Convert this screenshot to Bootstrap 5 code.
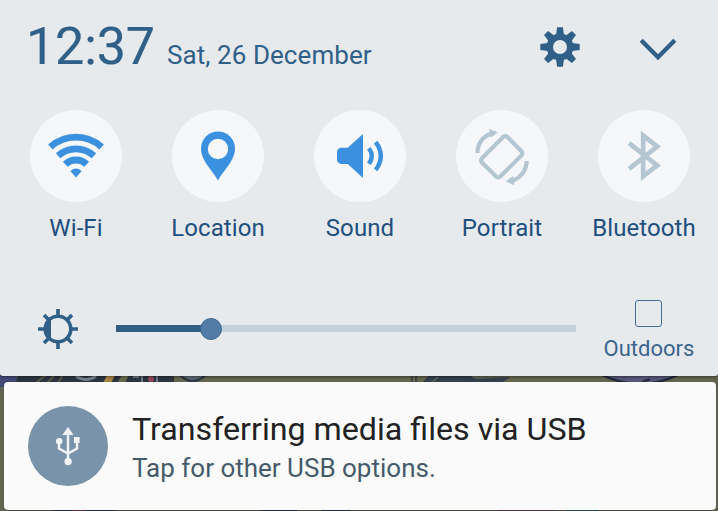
<!DOCTYPE html>
<html lang="en">
<head>
<meta charset="utf-8">
<meta name="viewport" content="width=device-width, initial-scale=1">
<title>Quick settings</title>
<link rel="stylesheet" href="https://cdn.jsdelivr.net/npm/bootstrap@5.3.0/dist/css/bootstrap.min.css">
<style>
body{font-family:Roboto,sans-serif;width:718px;height:511px;background:#63654f;color:#305f88}
svg{display:block;flex:none}
.wallpaper{z-index:-1}
.shade{height:376px;background:#e6eaed;border-radius:0 0 3px 3px;box-shadow:0 1px 3px rgba(0,0,0,.45)}
.shade-head{height:110px;padding:0 40px 0 26px}
.clock{font-size:52px;line-height:60px;margin-top:17px;width:130px;letter-spacing:-.1px;-webkit-text-stroke:.2px}
.date{font-size:26px;line-height:32px;margin:39px 0 0 11px;letter-spacing:.07px}
.head-icons{margin-top:27px;gap:58px}
.tiles{padding:0 3px 0 5px}
.tile{width:142px;font-size:24px;line-height:28px;letter-spacing:.1px;color:#214f7d}
.disc{width:92px;height:92px;background:#f5f7fa;margin-bottom:12px}
.on{color:#3b91df}
.off{color:#b5c6d3}
.bright{margin-top:57px;padding-left:38px}
.bright>svg{margin-top:10px}
.track{width:460px;height:7px;margin:26px 0 0 38px;background:#c3cfd9}
.track-fill{height:7px;background:#305f84}
.knob{width:22px;height:22px;left:84px;top:-7px;background:#527ca5;border:1px solid #3f6a93}
.outdoors{width:146px;margin-right:-4px;font-size:22px;line-height:26px;color:#3b658e}
.box{width:27px;height:27px;border:1.5px solid #426e97;border-radius:3px;margin:1px 1px 9px 0}
.note{margin:6px 2px 0 4px;height:128px;border-radius:4px;background:#fafafa;padding-left:24px;box-shadow:0 1px 2px rgba(0,0,0,.3)}
.note-icon{width:80px;height:80px;background:#7993aa}
.note-text{margin-left:24px;padding-top:2px}
.note-title{font-size:32.2px;line-height:38px;color:#222}
.note-sub{font-size:26px;line-height:32px;margin-top:4px;color:#455a6b}
</style>
<script src="https://cdn.jsdelivr.net/npm/bootstrap@5.3.0/dist/js/bootstrap.bundle.min.js"></script>
</head>
<body class="overflow-hidden position-relative">
<svg class="wallpaper position-absolute top-0 start-0" width="718" height="511" viewBox="0 0 718 511">
  <path d="M0 370H20L15 384 4 387H0Z" fill="#414a77"/>
  <path d="M19 374H174V384H15Z" fill="#2c3440"/>
  <path d="M36 383L46 375M47 383L55 375M58 383L63 375" stroke="#5a5d48" stroke-width="2"/>
  <path d="M76 376Q86 383 96 376" stroke="#78818a" stroke-width="3" fill="none"/>
  <path d="M103 383L107 375H115L111 383Z" fill="#a98543"/>
  <path d="M117 383L122 375H129L125 383Z" fill="#686a48"/>
  <path d="M133 377H139M142 382V376M157 376V382" stroke="#6f7a85" stroke-width="2"/>
  <circle cx="151" cy="379" r="3" fill="#91465a"/>
  <path d="M180 375Q192 387 206 375" fill="#5f6770" stroke="#2b3441" stroke-width="2"/>
  <path d="M412 384V374M416 384V374" stroke="#343d43" stroke-width="1.5"/>
  <path d="M421 384L430 374H468L476 379 510 377 500 384Z" fill="#343f4d"/>
  <path d="M472 377L495 375M430 384L438 377" stroke="#686c60" stroke-width="1.5"/>
  <path d="M600 374Q640 394 680 374Z" fill="#59577a" stroke="#202737" stroke-width="2"/>
  <path d="M641 384Q646 379 650 380" stroke="#202737" stroke-width="2" fill="none"/>
  <path d="M52 510.5H116M260 510.5H297M322 510.5H350" stroke="#303850" stroke-width="2"/>
  <path d="M72 510.5H85" stroke="#8b3850" stroke-width="2"/>
  <path d="M497 510.5H556" stroke="#6c4060" stroke-width="2"/>
  <path d="M567 510.5H598" stroke="#28616a" stroke-width="2"/>
</svg>

<section class="shade">
  <header class="shade-head d-flex align-items-start">
    <div class="clock">12:37</div>
    <div class="date">Sat, 26 December</div>
    <div class="head-icons d-flex ms-auto">
      <svg width="40" height="40" viewBox="-20 -20 40 40" fill="currentColor">
        <circle r="10.2" fill="none" stroke="currentColor" stroke-width="6.4"/>
        <g id="teeth"><path id="tooth" d="M-4-12L-2.9-19.7H2.9L4-12Z"/><use href="#tooth" transform="rotate(90)"/><use href="#tooth" transform="rotate(180)"/><use href="#tooth" transform="rotate(270)"/></g>
        <use href="#teeth" transform="rotate(45)"/>
      </svg>
      <svg width="40" height="40" viewBox="0 0 40 40" fill="none" stroke="currentColor" stroke-width="4.4"><path d="M3.2 13.2L20 30.2 36.8 13.2"/></svg>
    </div>
  </header>

  <div class="tiles d-flex">
    <div class="tile d-flex flex-column align-items-center">
      <div class="disc rounded-circle on"><svg width="92" height="92" fill="none" stroke="currentColor" stroke-width="6.8">
        <path d="M20.4 37A38.3 38.3 0 0 1 71.6 37M28.1 45.7A26.7 26.7 0 0 1 63.9 45.7M35.3 54.3A15.5 15.5 0 0 1 56.7 54.3"/>
        <path d="M46 67.5L40.4 60.9Q46 56 51.6 60.9Z" fill="currentColor" stroke="none"/></svg></div>
      <span>Wi-Fi</span>
    </div>
    <div class="tile d-flex flex-column align-items-center">
      <div class="disc rounded-circle on"><svg width="92" height="92" fill="currentColor"><path fill-rule="evenodd" d="M46 70.4C42 62 29 51 29 38.4A17 17 0 0 1 63 38.4C63 51 50 62 46 70.4ZM46 28.8A10.2 10.2 0 1 0 46 49.2 10.2 10.2 0 0 0 46 28.8Z"/></svg></div>
      <span>Location</span>
    </div>
    <div class="tile d-flex flex-column align-items-center">
      <div class="disc rounded-circle on"><svg width="92" height="92" fill="none" stroke="currentColor" stroke-width="4.4"><path d="M33.7 37.7L49 24V68L33.7 54H27Q23 53 23 49.5V42Q23 38.5 27 37.7Z" fill="currentColor" stroke="none"/><path d="M54.9 38.2Q60.7 46 54.9 53.8M61.7 32.1Q72 46 61.7 59.9"/></svg></div>
      <span>Sound</span>
    </div>
    <div class="tile d-flex flex-column align-items-center">
      <div class="disc rounded-circle off"><svg width="92" height="92" fill="none" stroke="currentColor" stroke-width="4.2"><rect x="-13" y="-18" width="26" height="36" rx="3" transform="translate(45.7 46.8) rotate(45)"/><path d="M21.3 43Q22 28 36 23.2M70.7 51Q70 65.5 56 71"/><path d="M33 19L42 22.3 34.7 27.7ZM57 66L49.7 71.4 58.5 75.3Z" fill="currentColor" stroke="none"/></svg></div>
      <span>Portrait</span>
    </div>
    <div class="tile d-flex flex-column align-items-center">
      <div class="disc rounded-circle off"><svg width="92" height="92" fill="none" stroke="currentColor" stroke-width="4.7" stroke-miterlimit="10"><path d="M31 33.2L59.2 55.4 45.2 66.3V25.5L59.2 36.6 31 58.8"/></svg></div>
      <span>Bluetooth</span>
    </div>
  </div>

  <div class="bright d-flex align-items-start">
    <svg width="40" height="40" viewBox="-20 -20 40 40" fill="none" stroke="currentColor" stroke-width="3.6">
      <circle r="12.8"/><path d="M-7-10.5V10.5A13 13 0 0 1-7-10.5Z" fill="currentColor" stroke="none"/>
      <path d="M0-14V-20M0 14V20M-14 0H-20M14 0H20M-9.5-9.5L-14-14M9.5-9.5L14-14M-9.5 9.5L-14 14M9.5 9.5L14 14"/>
    </svg>
    <div class="track position-relative flex-shrink-0"><div class="track-fill" style="width:20.6%"></div><div class="knob rounded-circle position-absolute"></div></div>
    <div class="outdoors d-flex flex-column align-items-center flex-shrink-0"><div class="box"></div><span>Outdoors</span></div>
  </div>
</section>

<article class="note d-flex align-items-center">
  <div class="note-icon rounded-circle flex-shrink-0"><svg width="80" height="80" fill="none" stroke="#f1f4f7" stroke-width="2.5">
    <path d="M40 27V56M31 36V42.5L40 47.5M49 34V42.5L40 47.5"/>
    <g fill="#f1f4f7" stroke="none"><path d="M40 21L45.6 29H34.4Z"/><circle cx="31.2" cy="35.2" r="3.2"/><path d="M46 31H51.6V37H46Z"/><circle cx="40.1" cy="55.6" r="3.7"/></g></svg></div>
  <div class="note-text">
    <div class="note-title">Transferring media files via USB</div>
    <div class="note-sub">Tap for other USB options.</div>
  </div>
</article>
</body>
</html>
